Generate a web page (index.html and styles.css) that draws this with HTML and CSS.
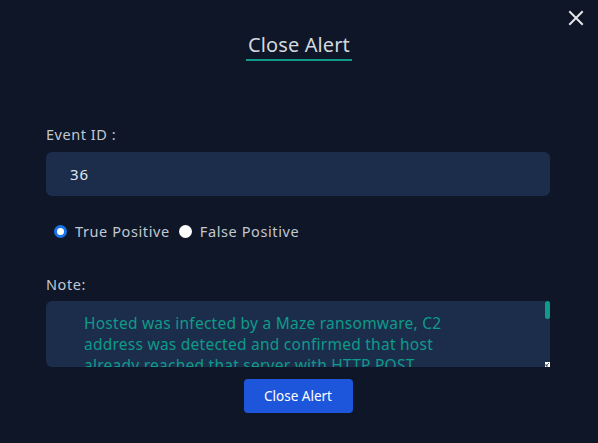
FILE: index.html
```html
<!DOCTYPE html>
<html>
<head>
<meta charset="utf-8">
<link rel="stylesheet" href="styles.css">
</head>
<body>
<div class="modal">
  <button class="close" aria-label="Close">
    <svg width="16" height="16" viewBox="0 0 16 16"><path d="M2 2L14 14M14 2L2 14" stroke="#e5e7eb" stroke-width="2" stroke-linecap="square"/></svg>
  </button>
  <div class="header">
    <h2 class="title">Close Alert</h2>
  </div>
  <form class="form">
    <label class="label label-event">Event ID :</label>
    <div class="input">36</div>
    <div class="radios">
      <label class="radio"><span class="dot dot-on"></span>True Positive</label>
      <label class="radio"><span class="dot"></span>False Positive</label>
    </div>
    <label class="label label-note">Note:</label>
    <div class="note-wrap">
      <textarea class="note">Hosted was infected by a Maze ransomware, C2 address was detected and confirmed that host already reached that server with HTTP POST requests. Host was isolated from the network and the incident was escalated to the incident response team for further analysis and remediation of the infected machine. All indicators of compromise were collected and blocked.</textarea>
      <span class="thumb"></span>
      <span class="grip"><svg width="5" height="5" viewBox="0 0 5 5"><path d="M1 4L4 1M1 4H3M1 4V2" stroke="#333" stroke-width="0.8" fill="none"/></svg></span>
    </div>
    <div class="actions">
      <button type="button" class="submit">Close Alert</button>
    </div>
  </form>
</div>
</body>
</html>
```
FILE: styles.css
```css
* { box-sizing: border-box; }
html, body { margin: 0; padding: 0; }
body {
  width: 598px;
  height: 443px;
  background: #0e1627;
  font-family: "Noto Sans", "Open Sans", sans-serif;
  overflow: hidden;
}
.modal {
  position: relative;
  width: 598px;
  height: 443px;
  background: #0e1627;
  padding-top: 31px;
}
.close {
  position: absolute;
  top: 10px;
  right: 14px;
  width: 16px;
  height: 16px;
  padding: 0;
  border: 0;
  background: transparent;
  display: flex;
}
.header {
  display: flex;
  justify-content: center;
}
.title {
  margin: 0;
  font-size: 20px;
  font-weight: 400;
  line-height: 27px;
  letter-spacing: 0.1px;
  color: #d3d8df;
  border-bottom: 2px solid #0f9a8a;
  padding: 0 2px 1px 2px;
}
.form {
  display: flex;
  flex-direction: column;
  padding: 0 48px 0 46px;
}
.label {
  font-size: 14.5px;
  line-height: 20px;
  letter-spacing: 0.55px;
  color: #c2c8d1;
}
.label-event { margin-top: 63px; }
.input {
  margin-top: 8px;
  height: 44px;
  background: #1b2d4b;
  border-radius: 6px;
  padding: 0 24px;
  display: flex;
  align-items: center;
  font-size: 15px;
  letter-spacing: 0.8px;
  color: #e3e7ee;
}
.radios {
  display: flex;
  align-items: center;
  gap: 9px;
  margin-top: 25px;
  padding-left: 8px;
  height: 20px;
}
.radio {
  display: flex;
  align-items: center;
  gap: 8px;
  font-size: 14.5px;
  letter-spacing: 0.6px;
  color: #c2c8d1;
}
.dot {
  width: 13px;
  height: 13px;
  border-radius: 50%;
  background: #ffffff;
  display: inline-block;
}
.dot-on {
  background: #ffffff;
  border: 3px solid #1a73e8;
}
.label-note { margin-top: 33px; }
.note-wrap {
  position: relative;
  margin-top: 7px;
  height: 66px;
}
.note {
  display: block;
  width: 100%;
  height: 66px;
  background: #1b2d4b;
  border: 0;
  border-radius: 6px;
  padding: 12px 66px 0 38px;
  font-family: "Noto Sans", "Open Sans", sans-serif;
  font-size: 15.5px;
  line-height: 21px;
  letter-spacing: 0.25px;
  color: #0f9a8a;
  resize: none;
  outline: none;
  overflow: hidden;
}
.thumb {
  position: absolute;
  top: 0;
  right: 0;
  width: 5px;
  height: 18px;
  border-radius: 3px;
  background: #0f9a8a;
}
.grip {
  position: absolute;
  right: 0;
  bottom: 0;
  width: 5px;
  height: 5px;
  background: #ffffff;
  display: flex;
}
.actions {
  display: flex;
  justify-content: center;
  margin-top: 12px;
}
.submit {
  width: 109px;
  height: 34px;
  border: 0;
  border-radius: 4px;
  background: #1d56db;
  color: #ffffff;
  font-family: "Noto Sans", "Open Sans", sans-serif;
  font-size: 13.5px;
  padding: 0;
}
```
